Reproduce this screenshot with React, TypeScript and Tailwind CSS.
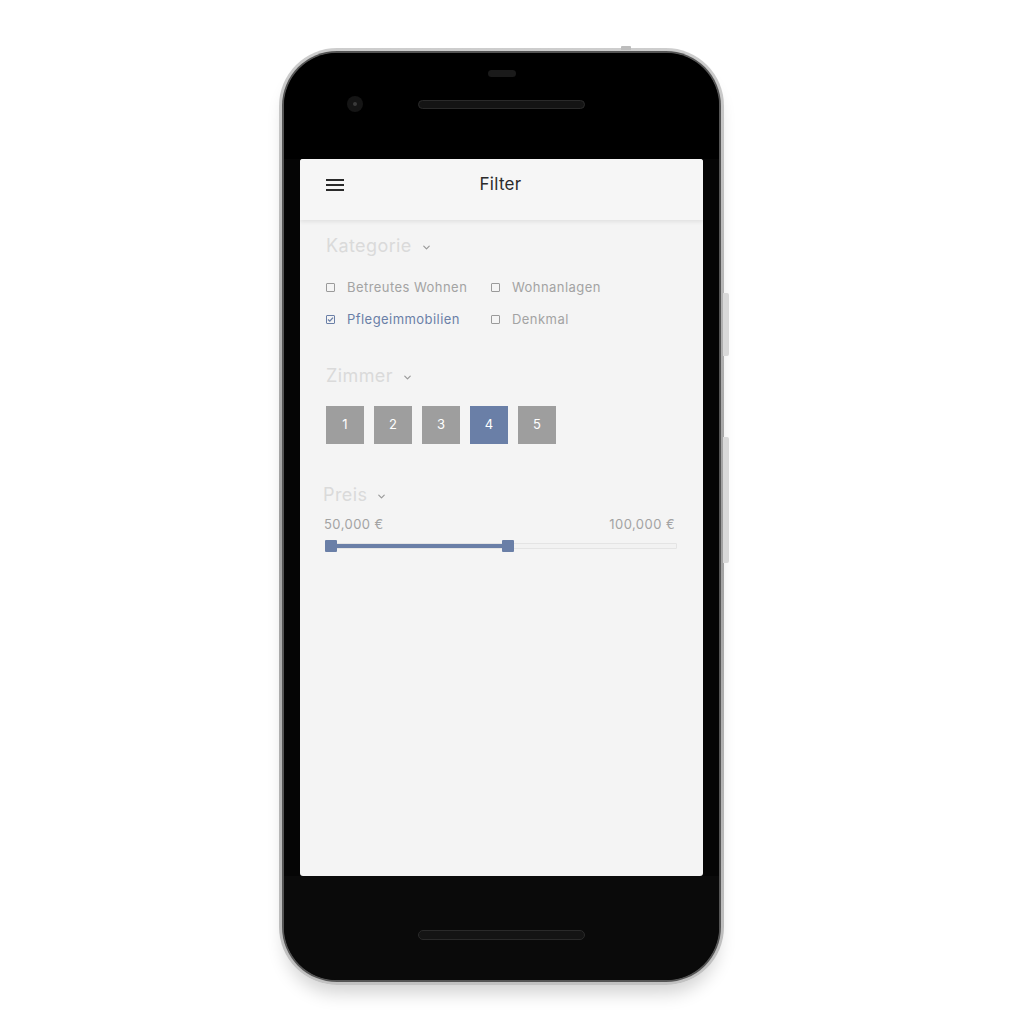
import { ChevronDown } from 'lucide-react'

const categories = [
  [
    { label: 'Betreutes Wohnen', checked: false },
    { label: 'Pflegeimmobilien', checked: true },
  ],
  [
    { label: 'Wohnanlagen', checked: false },
    { label: 'Denkmal', checked: false },
  ],
]

const rooms = [1, 2, 3, 4, 5]

function SectionTitle({ title, className = '' }: { title: string; className?: string }) {
  return (
    <div className={`flex items-center gap-[9px] h-[24px] ${className}`}>
      <span className="text-[18px] leading-[24px] tracking-[0.4px] text-[#dadada]">{title}</span>
      <ChevronDown size={11} strokeWidth={2.6} className="text-[#9a9a9a] mt-[2px]" />
    </div>
  )
}

function Checkbox({ label, checked }: { label: string; checked: boolean }) {
  return (
    <div className="flex items-center h-[20px]">
      <span
        className={`w-[9px] h-[9px] border-[1.5px] rounded-[1px] flex items-center justify-center ${
          checked ? 'border-[#6a7fa7]' : 'border-[#9a9a9a]'
        }`}
      >
        {checked && (
          <svg width="7" height="7" viewBox="0 0 7 7">
            <path d="M1 3.6 L2.8 5.2 L6 1.6" fill="none" stroke="#6a7fa7" strokeWidth="1.3" />
          </svg>
        )}
      </span>
      <span
        className={`ml-[12px] text-[13px] leading-[20px] tracking-[0.45px] ${
          checked ? 'text-[#6a7fa7]' : 'text-[#a3a3a3]'
        }`}
      >
        {label}
      </span>
    </div>
  )
}

function PriceSlider() {
  return (
    <div className="relative mt-[6px] h-[12px] w-[352px] -ml-[1px]">
      {/* unfilled track */}
      <div className="absolute left-0 right-0 top-[3px] h-[6px] bg-[#f2f2f2] border border-[#e4e4e4] rounded-[1px]" />
      {/* filled track */}
      <div className="absolute left-[5px] w-[178px] top-[4px] h-[4px] bg-[#6a7fa7]" />
      <div className="absolute left-0 top-0 w-[12px] h-[12px] bg-[#6a7fa7] rounded-[1px]" />
      <div className="absolute left-[177px] top-0 w-[12px] h-[12px] bg-[#6a7fa7] rounded-[1px]" />
    </div>
  )
}

function FilterScreen() {
  return (
    <div className="w-[403px] h-[717px] bg-[#f4f4f4] rounded-[3px] overflow-hidden flex flex-col">
      {/* header */}
      <div className="h-[61px] bg-[#f6f6f6] shadow-[0_2px_4px_rgba(0,0,0,0.08)] relative flex items-center justify-center shrink-0 z-10">
        <div className="absolute left-[26px] top-[20px] flex flex-col gap-[3px]">
          <span className="w-[18px] h-[2px] bg-[#2a2a2a]" />
          <span className="w-[18px] h-[2px] bg-[#2a2a2a]" />
          <span className="w-[18px] h-[2px] bg-[#2a2a2a]" />
        </div>
        <span className="text-[17px] tracking-[0.3px] text-[#2b2b2b] -mt-[10px] -ml-[2px]">Filter</span>
      </div>

      <div className="flex flex-col pl-[26px]">
        <SectionTitle title="Kategorie" className="mt-[14px]" />
        <div className="flex mt-[19px]">
          {categories.map((col, i) => (
            <div key={i} className={`flex flex-col gap-[12px] ${i === 0 ? 'w-[165px]' : ''}`}>
              {col.map((c) => (
                <Checkbox key={c.label} label={c.label} checked={c.checked} />
              ))}
            </div>
          ))}
        </div>

        <SectionTitle title="Zimmer" className="mt-[35px]" />
        <div className="flex gap-[10px] mt-[18px]">
          {rooms.map((r) => (
            <div
              key={r}
              className={`w-[38px] h-[38px] flex items-center justify-center text-[13px] text-white ${
                r === 4 ? 'bg-[#6a7fa7]' : 'bg-[#9e9e9e]'
              }`}
            >
              {r}
            </div>
          ))}
        </div>

        <SectionTitle title="Preis" className="mt-[39px] -ml-[3px]" />
        <div className="flex justify-between w-[351px] -ml-[2px] mt-[7px] text-[13px] leading-[20px] tracking-[0.45px] text-[#a3a3a3]">
          <span>50,000 €</span>
          <span>100,000 €</span>
        </div>
        <PriceSlider />
      </div>
    </div>
  )
}

export default function App() {
  return (
    <div
      className="w-[1020px] h-[1020px] bg-white flex pl-[279px] pt-[48px]"
      style={{ fontFamily: 'Inter, "Noto Sans", sans-serif' }}
    >
      <div className="relative">
        {/* side buttons */}
        <div className="absolute right-[-5px] top-[245px] w-[6px] h-[63px] bg-[#d9d9d9] rounded-r-[2px]" />
        <div className="absolute right-[-5px] top-[389px] w-[6px] h-[126px] bg-[#d9d9d9] rounded-r-[2px]" />
        <div className="absolute left-[342px] top-[-2px] w-[10px] h-[4px] bg-[#bdbdbd] rounded-t-[1px]" />

        <div className="w-[445px] h-[937px] rounded-[58px] p-[5px] bg-gradient-to-b from-[#cdcdcd] via-[#a0a0a0] to-[#c2c2c2] shadow-[0_14px_18px_-6px_rgba(0,0,0,0.18)]">
          <div className="w-full h-full rounded-[53px] bg-[#050505] ring-2 ring-[#555] flex flex-col items-center overflow-hidden">
            {/* top bezel */}
            <div className="relative w-full h-[106px] flex flex-col items-center bg-black">
              <div className="mt-[17px] w-[28px] h-[7px] rounded-full bg-[#1a1a1a]" />
              <div className="mt-[23px] w-[167px] h-[9px] rounded-full bg-[#141414] border border-[#2a2a2a]" />
              <div className="absolute left-[63px] top-[43px] w-[16px] h-[16px] rounded-full bg-[#151515] flex items-center justify-center">
                <div className="w-[4px] h-[4px] rounded-full bg-[#3a3a3a]" />
              </div>
            </div>

            <FilterScreen />

            {/* bottom bezel */}
            <div className="w-full flex-1 flex justify-center bg-[#0a0a0a]">
              <div className="mt-[54px] w-[167px] h-[10px] rounded-full bg-[#141414] border border-[#2a2a2a]" />
            </div>
          </div>
        </div>
      </div>
    </div>
  )
}
